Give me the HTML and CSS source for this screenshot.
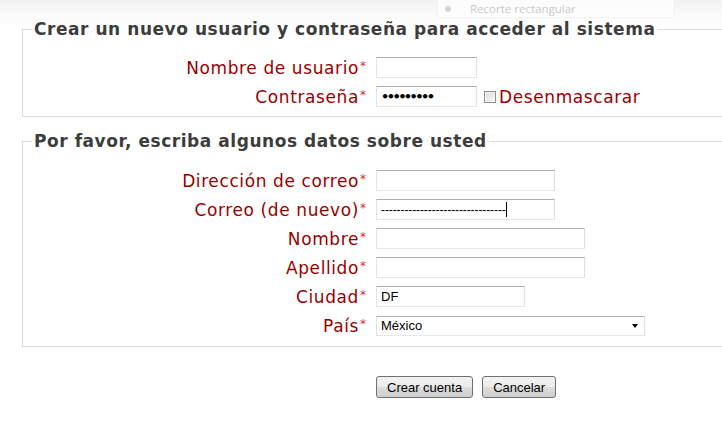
FILE: index.html
```html
<!DOCTYPE html>
<html lang="es">
<head>
  <meta charset="UTF-8" />
  <title>Nueva cuenta</title>
  <link rel="stylesheet" href="styles.css">
</head>
<body>

  <div class="menu-ghost">
    <span class="menu-dot"></span>
    <span>Recorte rectangular</span>
  </div>

  <form class="signup" onsubmit="event.preventDefault();">
    <fieldset class="group">
      <legend>Crear un nuevo usuario y contraseña para acceder al sistema</legend>
      <div class="rows">
        <label class="lbl" for="username">Nombre de usuario<span class="req">*</span></label>
        <div class="ctl"><input class="field w-sm" type="text" id="username" /></div>

        <label class="lbl" for="password">Contraseña<span class="req">*</span></label>
        <div class="ctl">
          <input class="field w-sm pass" type="password" id="password" value="123456789" />
          <input class="check" type="checkbox" id="unmask" />
          <label class="unmask" for="unmask">Desenmascarar</label>
        </div>
      </div>
    </fieldset>

    <fieldset class="group">
      <legend>Por favor, escriba algunos datos sobre usted</legend>
      <div class="rows">
        <label class="lbl" for="email">Dirección de correo<span class="req">*</span></label>
        <div class="ctl"><input class="field w-md" type="text" id="email" /></div>

        <label class="lbl">Correo (de nuevo)<span class="req">*</span></label>
        <div class="ctl">
          <div class="field w-md fake">--------------------------------<span class="caret"></span></div>
        </div>

        <label class="lbl" for="firstname">Nombre<span class="req">*</span></label>
        <div class="ctl"><input class="field w-lg" type="text" id="firstname" /></div>

        <label class="lbl" for="lastname">Apellido<span class="req">*</span></label>
        <div class="ctl"><input class="field w-lg" type="text" id="lastname" /></div>

        <label class="lbl" for="city">Ciudad<span class="req">*</span></label>
        <div class="ctl"><input class="field w-city" type="text" id="city" value="DF" /></div>

        <label class="lbl" for="country">País<span class="req">*</span></label>
        <div class="ctl">
          <span class="select-wrap">
            <select class="select" id="country">
              <option>México</option>
            </select>
          </span>
        </div>
      </div>
    </fieldset>

    <div class="actions">
      <button type="submit" class="btn">Crear cuenta</button>
      <button type="button" class="btn">Cancelar</button>
    </div>
  </form>

</body>
</html>
```

FILE: styles.css
```css
* {
  box-sizing: border-box;
}

body {
  margin: 0;
  height: 424px;
  font-family: "DejaVu Sans", Verdana, sans-serif;
  background: linear-gradient(#f1f1f1 0, #fafafa 14px, #fff 26px);
  position: relative;
  overflow: hidden;
}

/* faded context menu left over from the screen capture */
.menu-ghost {
  position: absolute;
  top: 0;
  left: 437px;
  width: 237px;
  height: 18px;
  background: rgba(255,255,255,0.75);
  border: 1px solid #f3f3f3;
  border-top: none;
  font-family: "Open Sans", "Liberation Sans", sans-serif;
  font-size: 11.5px;
  color: #c9c9c9;
  display: flex;
  align-items: center;
  padding-left: 7px;
  gap: 19px;
}

.menu-dot {
  width: 6px;
  height: 6px;
  border-radius: 50%;
  background: #d4d4d4;
}

.signup {
  padding: 19px 0 0 22px;
  width: 722px;
}

.group {
  margin: 0;
  border: 1px solid #dedede;
  border-right: none;
  padding: 18px 0 9px 0;
}

.group + .group {
  margin-top: 14px;
  padding: 19px 0 10px 0;
}

.group legend {
  margin-left: 9px;
  padding: 0 2px;
  font-size: 17px;
  font-weight: bold;
  letter-spacing: 0.55px;
  line-height: 20px;
  color: #3d3d3d;
}

.rows {
  display: grid;
  grid-template-columns: 343px auto;
  column-gap: 10px;
  row-gap: 8px;
  align-items: center;
}

.lbl {
  text-align: right;
  font-size: 17px;
  letter-spacing: 0.6px;
  color: #990000;
  white-space: nowrap;
}

.req {
  font-size: 12px;
  letter-spacing: 0;
  color: #cc3333;
  vertical-align: 4px;
  margin-left: 1px;
}

.ctl {
  display: flex;
  align-items: center;
  height: 21px;
}

.field {
  height: 21px;
  border: 1px solid;
  border-color: #abadb3 #dbdfe6 #e3e9ef #e2e3ea;
  background: #fff;
  padding: 0 4px;
  font-family: Arial, "Liberation Sans", sans-serif;
  font-size: 13px;
  color: #000;
  margin: 0;
}

.w-sm { width: 101px; }
.w-md { width: 179px; }
.w-lg { width: 209px; }
.w-city { width: 149px; }

.pass {
  font-family: "DejaVu Sans", sans-serif;
  font-size: 13px;
  font-weight: bold;
  letter-spacing: -2.6px;
}

.fake {
  display: flex;
  align-items: center;
  font-size: 12px;
  letter-spacing: -0.1px;
  white-space: nowrap;
  overflow: hidden;
}

.caret {
  display: inline-block;
  width: 1px;
  height: 15px;
  background: #000;
}

.check {
  appearance: none;
  width: 12px;
  height: 12px;
  margin: 0 3px 0 7px;
  border: 1px solid #8e8f8f;
  background: linear-gradient(135deg, #dcdcdc, #f6f6f6);
  box-shadow: inset 0 0 0 1px #f4f4f4;
}

.unmask {
  font-size: 17px;
  letter-spacing: 0.6px;
  color: #990000;
}

.select-wrap {
  position: relative;
  display: inline-block;
}

.select {
  appearance: none;
  display: block;
  width: 269px;
  height: 20px;
  border: 1px solid;
  border-color: #abadb3 #dbdfe6 #e3e9ef #e2e3ea;
  background: #fff;
  padding: 0 4px;
  font-family: Arial, "Liberation Sans", sans-serif;
  font-size: 13px;
  color: #000;
  border-radius: 0;
}

.select-wrap::after {
  content: "";
  position: absolute;
  right: 7px;
  top: 8px;
  border-left: 3.5px solid transparent;
  border-right: 3.5px solid transparent;
  border-top: 4px solid #000;
  pointer-events: none;
}

.actions {
  display: flex;
  gap: 9px;
  margin-top: 29px;
  padding-left: 354px;
}

.btn {
  height: 22px;
  padding: 0 10px;
  border: 1px solid #707070;
  border-radius: 3px;
  background: linear-gradient(#f2f2f2 0, #ebebeb 50%, #dddddd 51%, #cfcfcf 100%);
  font-family: Arial, "Liberation Sans", sans-serif;
  font-size: 13px;
  color: #000;
  cursor: pointer;
}

.btn:hover {
  background: linear-gradient(#eaf6fd 0, #d9f0fc 50%, #bee6fd 51%, #a7d9f5 100%);
  border-color: #3c7fb1;
}
```
